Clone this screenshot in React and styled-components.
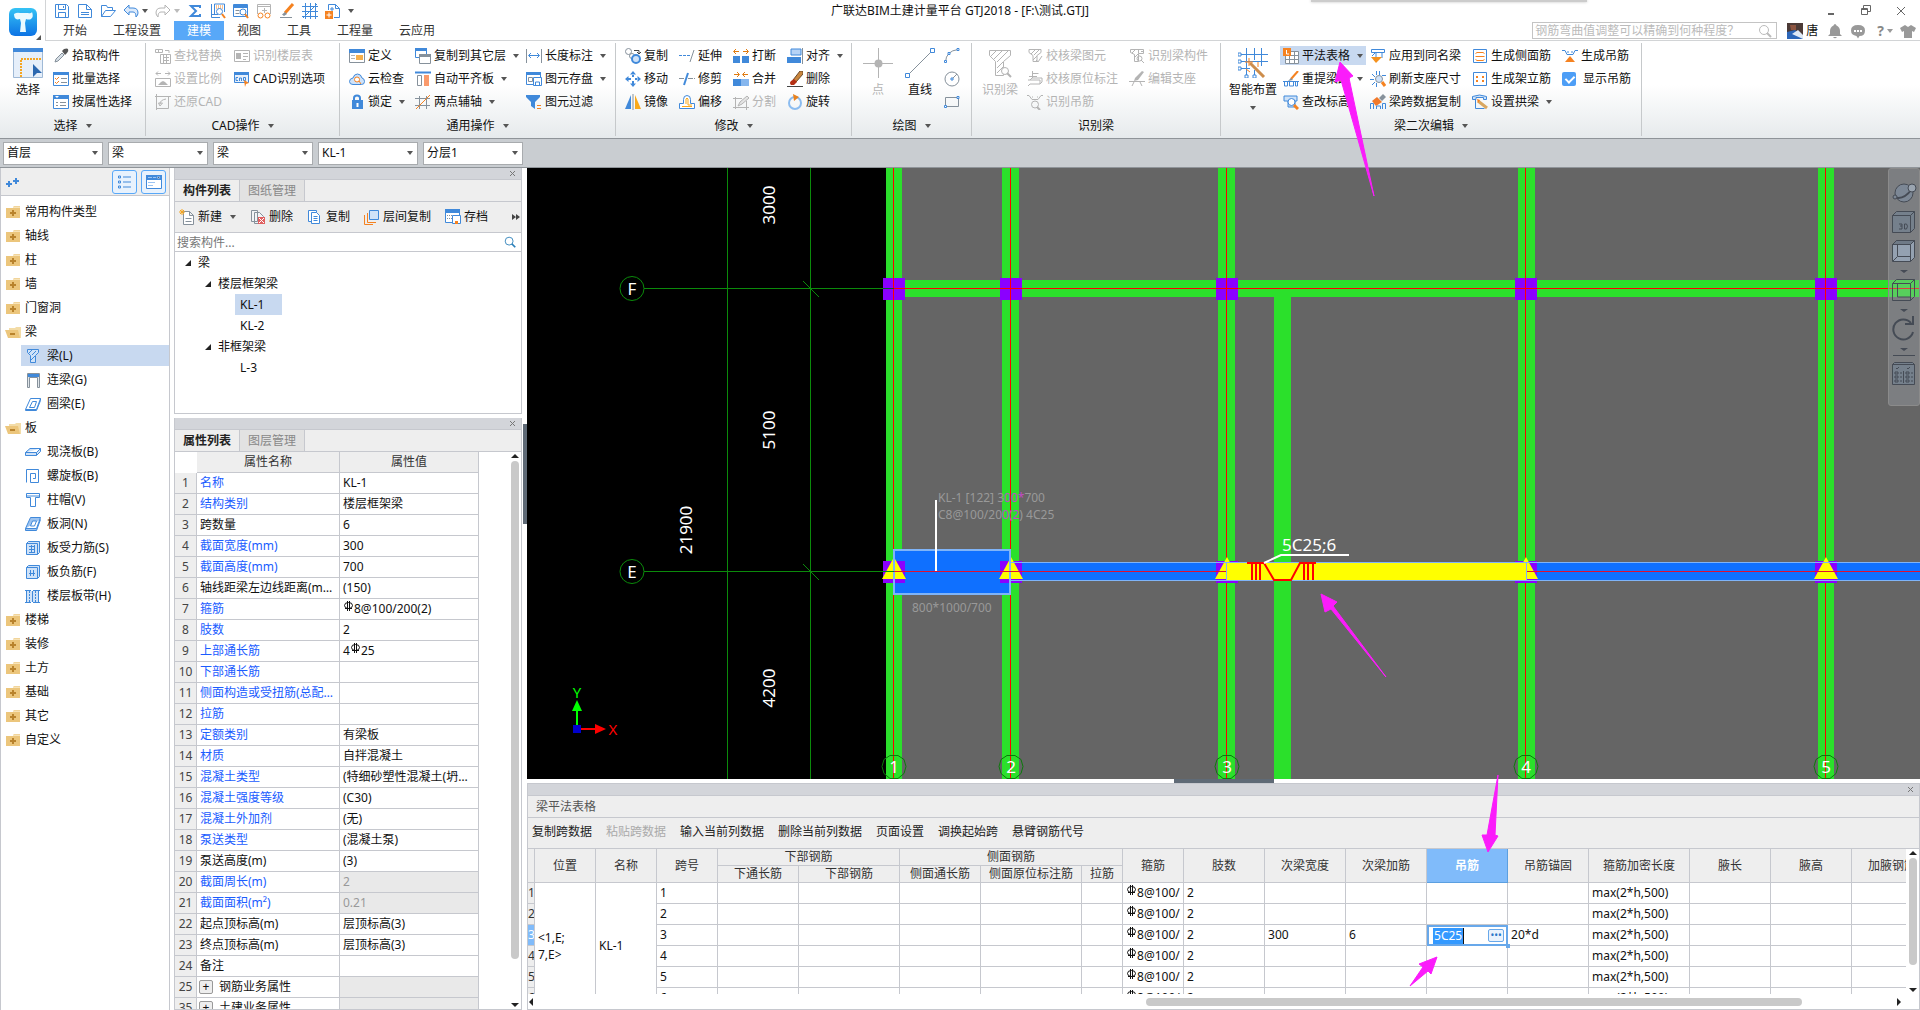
import styled, { createGlobalStyle, css } from 'styled-components';

const BLUE = '#4089da';
const PALE = '#cfe2f8';
const GREY = '#86919b';
const OFF = '#b4b4b4';
const ORANGE = '#f58220';
const LINE = '#c6c8ce';

const GlobalStyle = createGlobalStyle`
  * {
    box-sizing: border-box;
  }
  body {
    margin: 0;
    background: #fff;
  }
  body,
  button,
  input,
  select,
  table {
    font-family: 'Noto Sans', 'Noto Sans CJK SC', sans-serif;
    font-size: 12px;
    line-height: 16px;
    color: #111;
  }
  button {
    padding: 0;
    border: 0;
    background: none;
    white-space: nowrap;
  }
  ul {
    margin: 0;
    padding: 0;
    list-style: none;
  }
`;

/* ---------- icons ---------- */

const folder = (
  <>
    <path d="M1 4h7l1-2h6v12H1z" fill="#ecc67c" />
    <path d="M8 2.5h7V4H8z" fill="#f7e3b8" />
  </>
);

const filterShape = 'M2 1.5h12v3l-4 3v6H6v-6l-4-3z';

const icons = {
  save: (
    <g fill="none" stroke={BLUE}>
      <path d="M1.5 1.5h11l2 2v11h-13z" />
      <path d="M4.5 1.5v5h7v-5M4.5 14v-4.500h7V14M9.500 3v2" />
    </g>
  ),
  page: (
    <g fill="none" stroke={BLUE}>
      <path d="M1.500 1.500h8l5 5v8h-13zM9.500 1.500v5h5M4 9.500h8M4 11.500h8" />
    </g>
  ),
  open: (
    <path d="M1.5 13.500v-11h5l1 2h5v3h3l-5 6h-9l4-6h7" fill="none" stroke={BLUE} />
  ),
  undo: (
    <path d="M6 2 1 7l5 5V9h4q3 0 3 5 2-2 2-4 0-5-5-5H6z" fill="#dceafb" stroke={BLUE} />
  ),
  redo: (
    <path d="M10 2l5 5-5 5V9H6q-3 0-3 5-2-2-2-4 0-5 5-5h4z" fill="#fff" stroke={OFF} />
  ),
  sigma: <path d="M13 5V3H4l5 5-5 5h9v-2" fill="none" stroke={BLUE} strokeWidth="2" />,
  lookup: (
    <>
      <path d="M1.500 1v13.500H10M4.500 11.500V1h10v8M1.500 11.500H8" fill="none" stroke={BLUE} />
      <path d="M6 3h7M6 5h7" stroke={ORANGE} strokeDasharray="1 1" />
      <circle cx="9.500" cy="8.500" r="3" fill="#fff" stroke={BLUE} />
      <path d="m12 11 3 4" stroke={ORANGE} strokeWidth="2" />
    </>
  ),
  pageFind: (
    <>
      <path d="M.5 1.500h14v12H.5z" fill="#fff" stroke={BLUE} />
      <path d="M1 2h13v3H1z" fill={BLUE} />
      <path d="M2.500 7.500h4M2.500 10.500h4" stroke={GREY} />
      <circle cx="10" cy="9" r="3" fill="#fff" stroke={BLUE} />
      <path d="m12 11 3 4" stroke={ORANGE} strokeWidth="2" />
    </>
  ),
  glasses: (
    <>
      <path d="M1.500 11V1.500h13V11" fill="none" stroke={OFF} />
      <path d="M1 3.500h14M6 7.500h5M8.500 5v5" stroke={OFF} />
      <circle cx="4.500" cy="12.500" r="2.500" fill="#fff" stroke={ORANGE} />
      <circle cx="11.500" cy="12.500" r="2.500" fill="#fff" stroke={ORANGE} />
    </>
  ),
  brush: (
    <>
      <path d="M14 1 6 10" stroke={ORANGE} strokeWidth="3" />
      <path d="M3 11.500 6 9l2 2-3 2z" fill={GREY} />
      <path d="M1 14.500h12" stroke={GREY} />
    </>
  ),
  grid: (
    <path
      d="M3.500 0v16M8.500 0v16M13.500 0v16M0 3.500h16M0 8.500h16M0 13.500h16M1 15 15 1"
      fill="none"
      stroke={BLUE}
    />
  ),
  pageAdd: (
    <>
      <path d="M3.500 7V1.500h7l4 4v9H9M10.500 1.500v4h4" fill="none" stroke={BLUE} />
      <path d="M0 8h8v8H0z" fill={ORANGE} />
      <path d="M4 9.500v5M1.500 12h5" stroke="#fff" />
      <path d="M7 4v4M5 6h4" stroke={BLUE} />
    </>
  ),
  picker: (
    <>
      <path d="m2 14 1-3 6-6 2 2-6 6z" fill="#d7dfe6" stroke={GREY} />
      <path d="m9 3 2-2q3-1 4 0 1 2-1 4l-2 2z" fill="#555" />
    </>
  ),
  list: (
    <>
      <path d="M.5 1.500h15v13H.5z" fill="#fff" stroke={BLUE} />
      <path d="M0 1h16v3H0z" fill={BLUE} />
      <path d="m2 7 1.500 1.500L6 6M2 11l1.500 1.500L6 10" fill="none" stroke={ORANGE} />
      <path d="M8 7.500h6M8 11.500h6" stroke={GREY} />
    </>
  ),
  props: (
    <>
      <path d="M.5 1.500h15v13H.5z" fill="#fff" stroke={BLUE} />
      <path d="M0 1h16v4H0z" fill={BLUE} />
      <path d="m2 2 4 0-2 2z" fill="#fff" />
      <path d="M3 8.500h2M3 11.500h2M7 8.500h6M7 11.500h6" stroke={GREY} />
    </>
  ),
  swap: (
    <g fill="none" stroke={OFF}>
      <path d="M.5 1.500h7v3h-7zM3.500 1.500v3M10 2.500h4V5M5.500 6.500h10v9h-10zM8 9.500h6M8 12.500h6M8.500 7v8M11.500 7v8" />
    </g>
  ),
  card: (
    <>
      <path d="M.5 2.500h15v11H.5zM9 5.500h5M9 8.500h5M9 11.500h3" fill="none" stroke={OFF} />
      <path d="M2 5h5v6H2z" fill={OFF} />
    </>
  ),
  scale: (
    <>
      <path d="M1 2.500h5M10 2.500h5M3 .5l-2 2 2 2M13 .5l2 2-2 2M.5 7.500h15v8H.5z" fill="none" stroke={OFF} />
      <path d="m3 14 3-3 2-1 2 1 3 3z" fill={OFF} />
    </>
  ),
  cad: (
    <>
      <path d="M.5 1.500h14v10H.5z" fill="#e9f1fb" stroke={BLUE} />
      <path d="M0 1h15v3H0z" fill={BLUE} />
      <path d="M4 6.500H2v3h2M5.500 10V7h2v3M9.500 6.500h2v3h-2z" fill="none" stroke={BLUE} />
      <path d="m10 9 5 3-3 1-1 3z" fill={ORANGE} />
    </>
  ),
  restore: (
    <g fill="none" stroke={OFF}>
      <path d="M1.500 2.500h12v12h-12zM0 2.500h16M1.500 0v16" />
      <path d="M5 10q0-4 6-5M5 12 3.500 9h4z" strokeWidth="1" />
    </g>
  ),
  define: (
    <>
      <path d="M.5 1.500h15v13H.5z" fill="#fff" stroke={GREY} />
      <path d="M0 1h16v4H0z" fill={BLUE} />
      <path d="M2 7.500h4M2 10.500h4" stroke={OFF} />
      <path d="M7 7h7v5H7z" fill="#f6b04c" />
    </>
  ),
  cloud: (
    <>
      <path d="M4 13.500q-3.500 0-3.500-3T4 7q1-4 4.500-4T13 7q2.500.5 2.500 3.500t-3 3z" fill={PALE} stroke={BLUE} />
      <circle cx="8" cy="8.500" r="2.500" fill="#fff" stroke={ORANGE} />
      <path d="m10 10 2 3" stroke={ORANGE} />
    </>
  ),
  lock: (
    <>
      <path d="M5 7V4q0-2.500 3-2.500T11 4v3" fill="none" stroke={BLUE} strokeWidth="2" />
      <path d="M3 6h11v9H3z" fill={BLUE} />
      <path d="M8.500 9v4" stroke="#fff" strokeWidth="2" />
    </>
  ),
  copyFloor: (
    <>
      <path d="M.5 1.500h11v8H.5z" fill="#fff" stroke={BLUE} />
      <path d="M0 0h12v3H0z" fill={BLUE} />
      <path d="M4.500 7.500h11v8h-11z" fill="#fff" stroke={GREY} />
      <path d="M4 6h12v3H4z" fill={GREY} />
    </>
  ),
  align: (
    <>
      <path d="M0 1.500h16" stroke={BLUE} strokeWidth="2" />
      <path d="M2.500 4.500h4v10h-4z" fill="#fff" stroke={GREY} />
      <path d="M9 4h5v11H9z" fill="#fa9a6c" />
    </>
  ),
  twoPoint: (
    <>
      <path d="M4.500 2v13M11.500 2v13M0 4.500h15M0 11.500h15" stroke={GREY} />
      <path d="M1 15 15 1" stroke={ORANGE} />
    </>
  ),
  length: (
    <>
      <path d="M.5 1v14M15.500 1v14" stroke={GREY} />
      <path d="M3 7.500h10M5 5 2.500 7.500 5 10M11 5l2.500 2.500L11 10" fill="none" stroke={BLUE} strokeWidth="1" />
    </>
  ),
  store: (
    <>
      <path d="M.5 1.500h14v12H.5z" fill="#fff" stroke={BLUE} />
      <path d="M0 1h15v3H0z" fill={BLUE} />
      <path d="M2.500 6.500h4v4h-4z" fill="none" stroke={GREY} />
      <path d="M7.500 6.500h8v8h-8zM9.500 14v-3h4v3" fill="#fff" stroke={BLUE} />
    </>
  ),
  filter: (
    <>
      <path d="M0 1h14v2L9 8v7L5 12V8L0 3z" fill={BLUE} />
      <path d="M11 11.500h4M11 14.500h4" stroke={ORANGE} />
    </>
  ),
  copy: (
    <>
      <circle cx="3.500" cy="3.500" r="3" fill="#fff" stroke={GREY} />
      <circle cx="7" cy="8" r="2.500" fill="#fff" stroke={GREY} />
      <circle cx="11" cy="11" r="4" fill={PALE} stroke={BLUE} strokeWidth="2" />
      <path d="M9 2.500h5V6M12 4l2 2 2-2" fill="none" stroke="#444" />
    </>
  ),
  move: (
    <path
      d="M8 0 5 3.500h6zM8 16l-3-3.500h6zM0 8l3.500-3v6zM16 8l-3.500-3v6zM7 3h2v3H7zM7 10h2v3H7zM3 7h3v2H3zM10 7h3v2h-3z"
      fill={BLUE}
    />
  ),
  mirror: (
    <>
      <path d="M6 1v14H0z" fill={BLUE} />
      <path d="M10 1v14h6z" fill="#fba919" />
      <path d="M8 0v16" stroke={GREY} />
    </>
  ),
  extend: (
    <>
      <path d="M0 7.500h11" stroke={BLUE} strokeDasharray="3 1" />
      <path d="m15 2-4 12" stroke={GREY} />
    </>
  ),
  trim: (
    <>
      <path d="M0 7.500h5M9 7.500h7" stroke={GREY} strokeDasharray="5 1 2 1" />
      <path d="M9 2 5 14" stroke={BLUE} strokeWidth="2" />
    </>
  ),
  offset: (
    <>
      <path d="M.5 14.500v-5h4v-4q0-4 3.500-4t3.500 4v4h4v5z" fill="#fff" stroke={BLUE} />
      <path d="M3 12.500h10M7 10V5q1-2 2 0v6h4" fill="none" stroke="#fba919" />
    </>
  ),
  breakUp: (
    <>
      <path d="M0 8h7v7H0zM9 8h7v7H9z" fill={BLUE} />
      <path d="M1 3.500h5M10 3.500h5M3 1 .5 3.500 3 6M13 1l2.500 2.500L13 6" fill="none" stroke="#e07b10" />
    </>
  ),
  merge: (
    <>
      <path d="M0 8h8v7H0z" fill={BLUE} />
      <path d="M8 8h8v7H8z" fill="#85b6ee" />
      <path d="M1 3.500h5M10 3.500h5M4 1l2.500 2.500L4 6M12 1 9.500 3.500 12 6" fill="none" stroke="#e07b10" />
    </>
  ),
  split: (
    <>
      <path d="M0 4.500h9M2.500 3v12M0 13.500h16M13.500 7v9" stroke={OFF} />
      <path d="m5 12 2-4 7-6 2 2-7 6z" fill="#e4e4e4" stroke={OFF} />
    </>
  ),
  alignSide: (
    <>
      <path d="M4 1h10v6H4z" fill="#b6d3f6" stroke={BLUE} />
      <path d="M0 9h14v6H0z" fill={BLUE} />
      <path d="M15.500 0v16" stroke={GREY} />
    </>
  ),
  erase: (
    <>
      <path d="m6 9 7-9h3v3l-7 8z" fill="#c9853c" stroke="#6b4a2a" />
      <path d="m4 10 3-2 3 3-3 3H4q-2-2 0-4z" fill="#b42f14" />
      <path d="M0 15.500h16" stroke="#444" />
    </>
  ),
  rotate: (
    <>
      <circle cx="8" cy="9" r="6" fill="none" stroke="#8bbcf0" strokeWidth="2" />
      <path d="m6 0 6 3-5 4z" fill="#e8821e" />
    </>
  ),
  arc: (
    <>
      <path d="M1.500 14Q2 3 14 1.500" fill="none" stroke={GREY} />
      <path d="M.5 12.500h2v2h-2zM4 4.500h2v2H4zM13 .5h2v2h-2z" fill="#fff" stroke={BLUE} />
    </>
  ),
  circle: (
    <>
      <circle cx="8" cy="8" r="7" fill="none" stroke={GREY} />
      <path d="m8 8 5-5" stroke={GREY} />
      <path d="M7 7h2v2H7z" fill="#fff" stroke={BLUE} />
    </>
  ),
  rect: (
    <>
      <path d="M1.500 3.500h13v9h-13z" fill="none" stroke={GREY} />
      <path d="M.5 11.500h2v2h-2zM13 2.500h2v2h-2z" fill="#fff" stroke={BLUE} />
    </>
  ),
  checkBeam: (
    <g fill="none" stroke={OFF}>
      <path d={filterShape} />
      <path d="m4 6 4-4M7 7l5-5M6 12l4-4M9 12l2 2 4-6" />
    </g>
  ),
  checkNote: (
    <g fill="none" stroke={OFF}>
      <path d="M5.500 0v7M2 5.500h8M5.500 2.500h6M1 9h12v4H3l-2 2M3 9l2-2h10v4l-2 2" />
    </g>
  ),
  hangerFind: (
    <>
      <path d="M0 1.500h2l3 4h6l3-4h2M5 3h1M10 3h1" fill="none" stroke={OFF} />
      <circle cx="8" cy="10.500" r="3.500" fill="none" stroke={OFF} />
      <path d="m10 13 3 3" stroke={OFF} strokeWidth="2" />
    </>
  ),
  beamPart: (
    <g fill="none" stroke={OFF}>
      <path d="M1.500 1.500h13v4h-5v8h-4v-7l-4-2zM9.500 1.500v4M12 3.500h3" />
      <circle cx="10.500" cy="10.500" r="2.500" />
      <path d="m12 12 3 3M3 5l4-4M6 9l3-3" />
    </g>
  ),
  seat: (
    <>
      <path d="M0 10.500h16M5 11l-2 4M11 11l2 4" stroke={OFF} />
      <path d="m5 10 1-3 7-7 2 1-6 8z" fill={OFF} />
    </>
  ),
  sheet: (
    <>
      <path d="M2.500 3.500h13v12h-13zM2 7.500h14M2 11.500h14M6.500 3v13M11.500 3v13" fill="#fff" stroke={GREY} />
      <path d="M0 0h8v8H0z" fill={ORANGE} />
      <path d="M3.500 2v4H6" fill="none" stroke="#fff" />
    </>
  ),
  reSpan: (
    <>
      <path d="M15 0 8 8" stroke={ORANGE} strokeWidth="2" />
      <path d="m5 10 3-3 2 2z" fill={GREY} />
      <path d="M0 10.500h16M1.500 11v4h3v-4M6.500 11v4h4v-4M12.500 11v4h2v-4" fill="none" stroke={BLUE} />
    </>
  ),
  level: (
    <>
      <path d="M1 2h13v5h-2v6H5V7H1z" fill={PALE} stroke={BLUE} />
      <circle cx="8.500" cy="8" r="3.500" fill="#fff" stroke={BLUE} />
      <path d="m11 11 4 4" stroke={ORANGE} strokeWidth="3" />
    </>
  ),
  applySame: (
    <>
      <path d="M1.500 1.500h13v3h-13zM5 5l-3 3M12 5v5" fill="#fff" stroke={BLUE} />
      <path d="M1 9h11l-6 6z" fill="#f5921e" />
      <path d="M6 5v4" stroke={BLUE} />
    </>
  ),
  refresh: (
    <>
      <path d="M0 8.500h4M12 4.500h4M6.500 0v4M9.500 0v4M6.500 12v4M2 3l3 3M2 14l3-3" stroke={BLUE} />
      <circle cx="9" cy="8" r="3.500" fill={PALE} stroke={GREY} />
      <path d="m12 11 3 4" stroke={ORANGE} strokeWidth="3" />
    </>
  ),
  spanCopy: (
    <>
      <path d="m2 7 5-4 5 5-6 4z" fill="#f0792b" />
      <path d="m9 4 4-4 3 3-4 4z" fill={GREY} />
      <path d="M.5 15V9.500h3V15M6.500 15v-3h4v3M12.500 15V9.500h3V15" fill="none" stroke={BLUE} />
    </>
  ),
  sideBar: (
    <>
      <path d="M1.500 1.500h13v13h-13z" fill="#fff" stroke={BLUE} strokeWidth="1" />
      <path d="M5 4.500h6l1.500 1M3.500 8.500h9M5 12.500h6l1.500-1M3.500 5.500 5 4.500M3.500 11.500l1.500 1" stroke={ORANGE} fill="none" />
    </>
  ),
  frameBar: (
    <>
      <path d="M1.500 1.500h13v13h-13z" fill="#fff" stroke={BLUE} />
      <path d="M4 5h2v2H4zM10 5h2v2h-2zM4 9h2v2H4zM10 9h2v2h-2z" fill={ORANGE} />
    </>
  ),
  arch: (
    <>
      <path d="M.5 5.500v-3q7-3 14 0v3h-3v-2H4v2z" fill={PALE} stroke={BLUE} />
      <path d="M3.500 6v8.500h9" fill="none" stroke={BLUE} />
      <path d="m6 7 9 7" stroke="#d9a760" strokeWidth="3" />
      <path d="m5 5 3 1-2 3z" fill={ORANGE} />
    </>
  ),
  hanger: (
    <>
      <path d="M0 2.500h3l2 4h6l2-4h3M6 3v2M10 3v2" fill="none" stroke={BLUE} />
      <path d="m8 8 5 6H3z" fill={ORANGE} />
    </>
  ),
  create: (
    <>
      <path d="M4.500 2.500h6l4 4v9h-10zM10.500 2.500v4h4M6.500 9.500h6M6.500 12.500h6" fill="#fff" stroke={GREY} />
      <path d="M3 0v6M0 3h6M1 1l4 4M5 1 1 5" stroke="#f5a623" />
    </>
  ),
  remove: (
    <>
      <path d="M1.500 1.500h6v11h-6zM4.500 3.500h5l4 4v7h-9z" fill="#f2f4f6" stroke={GREY} />
      <path d="M8 8h7v7H8z" fill="#e06060" />
      <path d="m9 9 5 5M14 9l-5 5" stroke="#fff" />
    </>
  ),
  duplicate: (
    <>
      <path d="M1.500 1.500h8v11h-8z" fill="#fff" stroke={BLUE} />
      <path d="M4.500 3.500h5l3 3v8h-8zM6.500 7.500h4M6.500 9.500h4M6.500 11.500h4" fill="#fff" stroke={BLUE} />
    </>
  ),
  floorCopy: (
    <>
      <path d="M5.500 1.500h9v9h-9z" fill={PALE} stroke={BLUE} />
      <path d="M3.500 4v9.500H12M.5 6v9.500H9" fill="none" stroke={ORANGE} />
    </>
  ),
  archive: (
    <>
      <path d="M.5 1.500h14v12H.5z" fill="#fff" stroke={BLUE} />
      <path d="M0 0h15v4H0z" fill={BLUE} />
      <path d="M2 6.500h5M2 9.500h5" stroke={GREY} strokeDasharray="1 1" />
      <path d="M7.500 6.500h8v8h-8z" fill="#fff" stroke={BLUE} />
      <path d="M10 12h3v3h-3z" fill={ORANGE} />
    </>
  ),
  folderPlus: (
    <>
      {folder}
      <path d="M8 6v6M5 9h6" stroke="#b9832d" strokeWidth="2" />
    </>
  ),
  folderMinus: (
    <>
      <path d="M4 4h6l1-1h5v11H4z" fill="#f3dca7" />
      <path d="M0 6h13l2 8H3z" fill="#ecc67c" />
      <path d="M5 10h5" stroke="#b9832d" strokeWidth="2" />
    </>
  ),
  beam: (
    <>
      <path d="M2.500 1.500h11v3l-3 3v7h-5v-7l-3-3z" fill={PALE} stroke={BLUE} />
      <path d="m4 5 3-3M7 7l4-4M6 12l4-4" stroke={BLUE} />
    </>
  ),
  linkBeam: (
    <>
      <path d="M2.500 1.500h12v14h-2v-10h-8v10h-2z" fill="#e1e6ea" stroke={GREY} />
      <path d="M3 2h11v3H3z" fill={BLUE} />
    </>
  ),
  ringBeam: (
    <path d="M5.500 2.500h10l-4 11H.5zM7.500 5.500h4l-2 6H4.500zM.5 13.500v1h11l4-10v-2" fill="#fff" stroke={BLUE} />
  ),
  slab: <path d="M.5 8.500 5 4.500h10.500v3l-4 4H.5zM.5 8.500h11l4-4M11.500 8.500v3" fill={PALE} stroke={BLUE} />,
  spiral: (
    <path d="M1.500 14.500v-13h12v13h-8v-9h5v5H8" fill="none" stroke={BLUE} />
  ),
  cap: <path d="M1.500 1.500h13v4h-4v9h-5v-9h-4zM1.500 4h13" fill="#fff" stroke={BLUE} />,
  hole: (
    <>
      <path d="M5.500 1.500h10l-4 11H.5zM.5 12.500v2h11l4-11" fill="#9cc3f0" stroke={BLUE} />
      <path d="M7.500 5h4l-2 5H5.500z" fill="#fff" stroke={BLUE} />
    </>
  ),
  slabBar: (
    <path d="M1.500 3.500h11v11h-11zM1.500 3.500l2-2h11v11l-2 2M4 6.500h6M4 9.500h6M4 12.500h6M6.500 5v8M9.500 5v8" fill={PALE} stroke={BLUE} />
  ),
  negBar: (
    <path d="M1.500 3.500h11v11h-11zM1.500 3.500l2-2h11v11l-2 2M4 9.500h6M5.500 6v6M8.500 6v6" fill={PALE} stroke={BLUE} />
  ),
  strip: (
    <>
      <path d="M1 3h13v11H1z" fill={PALE} />
      <path d="M0 2.500h6M8 2.500h7M1.500 3v11M7.500 3v11M13.500 3v11M0 14.500h6M8 14.500h7" stroke={BLUE} />
      <path d="M4.500 3v11M10.500 3v11" stroke={BLUE} strokeDasharray="2 1" />
    </>
  ),
  bell: <path d="M8 1q1 0 1.500 1.500Q13 4 13 8v3l2 2H1l2-2V8q0-4 3.500-5.500Q7 1 8 1zM6 14h4q-2 2.500-4 0z" fill="#999" />,
  chat: (
    <>
      <path d="M8 2q7 0 7 5.500T9.500 13L8 15.500 6.500 13Q1 12 1 7.500 1 2 8 2z" fill="#999" />
      <path d="M4 7h2v2H4zM7 7h2v2H7zM10 7h2v2h-2z" fill="#fff" />
    </>
  ),
  shirt: <path d="m5 2 3 2 3-2 5 3-2 4-2-1v7H4V8L2 9 0 5z" fill="#999" />,
  search: (
    <>
      <circle cx="7" cy="7" r="4.500" fill="none" stroke="currentColor" />
      <path d="m10 10 4 4" stroke="currentColor" strokeWidth="2" />
    </>
  ),
  restoreWin: <path d="M5.500 5.500v-3h7v6h-3M3.500 5.500h6v6h-6zM3 6.500h7" fill="none" stroke="#666" />,
  closeWin: <path d="m4 4 8 8M12 4l-8 8" stroke="#666" />,
  minWin: <path d="M5 11h6" stroke="#666" strokeWidth="2" />,
  plusPlus: <path d="M4 7v6M1 10h6M11 4v6M8 7h6" stroke={BLUE} strokeWidth="2" />,
  avatar: (
    <>
      <path d="M0 0h16v16H0z" fill="#4c3a36" />
      <path d="M0 9 8 7l8 6v3H0z" fill="#2c66b8" />
      <path d="m5 11 6-4 5 5v4z" fill="#dfe9f5" />
      <path d="M3 2h6v5H4z" fill="#8d5440" />
    </>
  ),
};

const bigIcons = {
  select: (
    <>
      <path d="M.5.5h29v29H.500z" fill="#e6effa" stroke="#9fb9d6" />
      <path d="M0 0h30v4H0z" fill={BLUE} />
      <path d="M8 29V11h21" fill="none" stroke="#f5a623" strokeWidth="2" strokeDasharray="2 1" />
      <path d="m20 16 9 9-5 0-4 4z" fill="#2c68b0" />
    </>
  ),
  point: (
    <>
      <path d="M0 15.500h30M15.500 0v30" stroke={OFF} />
      <circle cx="15.500" cy="15.500" r="4" fill={OFF} />
    </>
  ),
  line: (
    <>
      <path d="M3 27 27 3" stroke={GREY} />
      <path d="M.5 25.500h4v4h-4zM25.500.5h4v4h-4z" fill="#fff" stroke={BLUE} />
    </>
  ),
  beamBig: (
    <>
      <path d="M4.500 2.500h21v5l-7 6v14h-8v-14l-6-6z" fill="none" stroke={OFF} />
      <path d="m6 8 5-5M9 11l8-8M12 14 23 3M12 20l6-6M12 25l6-6" stroke={OFF} />
      <circle cx="20" cy="23" r="3.500" fill="#fff" stroke={OFF} />
      <path d="m22 25 4 4" stroke={OFF} strokeWidth="2" />
    </>
  ),
  smart: (
    <>
      <path d="M0 6.500h30M0 13.500h30M0 20.500h12M8.500 0v30M16.500 0v12M16.500 22v8M23.500 0v18" stroke={BLUE} />
      <path d="M0 5h3v3H0zM0 12h3v3H0zM0 19h3v3H0zM7 27h3v3H7zM15 27h3v3h-3z" fill="#fff" stroke={BLUE} />
      <path d="m12 15 14 14" stroke="#cd8d4c" strokeWidth="3" />
      <path d="M11 10v8M7 14h8M8 21l4 3M20 14v5" stroke={ORANGE} />
    </>
  ),
};

const Svg = styled.svg`
  flex: none;
  display: block;
`;

function Icon({ name, size = 16 }) {
  return (
    <Svg width={size} height={size} viewBox="0 0 16 16" aria-hidden="true">
      {icons[name]}
    </Svg>
  );
}

const Caret = styled.span`
  flex: none;
  border: 3px solid transparent;
  border-top: 4px solid ${(p) => p.$color || '#555'};
  border-bottom: 0;
`;

/* ---------- title bar ---------- */

const Shell = styled.div`
  position: relative;
  display: flex;
  flex-direction: column;
  height: 100vh;
  overflow: hidden;
`;
const Header = styled.header`
  display: flex;
  height: 41px;
  border-bottom: 1px solid #d2d4d6;
`;
const LogoBox = styled.div`
  width: 46px;
  height: 41px;
  padding: 8px 0 0 9px;
  background: #fff;
  border-right: 1px solid #d2d4d6;
`;
const HeaderMain = styled.div`
  flex: 1;
  display: grid;
  grid-template-columns: 1fr auto 1fr;
  grid-template-rows: 21px 19px;
`;
const QuickBar = styled.div`
  display: flex;
  align-items: center;
  padding-left: 8px;
  gap: 7px;
`;
const QuickButton = styled.button`
  display: flex;
  align-items: center;
  gap: 3px;
`;
const Title = styled.h1`
  margin: 0;
  padding-right: 46px;
  font-size: 12px;
  font-weight: 400;
  line-height: 22px;
`;
const WindowButtons = styled.div`
  display: flex;
  justify-content: flex-end;
  align-items: center;
  gap: 19px;
  padding-right: 11px;
`;
const Tabs = styled.nav`
  display: flex;
  padding-left: 4px;
`;
const Tab = styled.button`
  padding: 0 13px;
  color: ${(p) => (p.$active ? '#fff' : '#333')};
  background: ${(p) => (p.$active ? '#58a8f8' : 'none')};
`;
const UserBar = styled.div`
  grid-column: 3;
  display: flex;
  justify-content: flex-end;
  align-items: center;
  gap: 7px;
  padding-right: 4px;
`;
const HelpBox = styled.label`
  display: flex;
  align-items: center;
  width: 245px;
  height: 17px;
  margin-right: 3px;
  padding-right: 3px;
  border: 1px solid #c4c4c4;
  color: #bbb;
  input {
    flex: 1;
    min-width: 0;
    height: 15px;
    padding: 0 2px;
    border: 0;
    outline: 0;
    background: none;
  }
  input::placeholder {
    color: #bbb;
  }
`;
const UserName = styled.span`
  margin: 0 2px 0 -4px;
`;
const HelpButton = styled.button`
  display: flex;
  align-items: center;
  gap: 3px;
  padding-left: 4px;
  color: #888;
  font-size: 14px;
  font-weight: 700;
`;
const PopupShadow = styled.div`
  position: absolute;
  top: 0;
  left: 1311px;
  width: 276px;
  height: 2px;
  background: #ccc;
  box-shadow: 0 0 3px #bbb;
`;

function Logo() {
  return (
    <Svg width="32" height="32" viewBox="0 0 32 32" role="img" aria-label="GTJ">
      <defs>
        <linearGradient id="logo" x1="0" y1="0" x2="0" y2="1">
          <stop offset="0" stopColor="#35c3f5" />
          <stop offset="1" stopColor="#0d73e4" />
        </linearGradient>
      </defs>
      <rect width="28" height="28" rx="6" fill="url(#logo)" />
      <path d="M5 6q3-2 6-1h8q3 1 4-1 2 5-1 7-2 1-5 0l-1 4 1 9h-6l1-9-1-4q-6 2-6-5z" fill="#e9faff" />
      <path d="M32 27v5h-5z" fill="#555" />
    </Svg>
  );
}

const quickItems = [
  ['save', '保存'],
  ['page', '新建'],
  ['open', '打开'],
  ['undo', '撤销', '#555'],
  ['redo', '恢复', '#bbb'],
  ['sigma', '汇总'],
  ['lookup', '查看'],
  ['pageFind', '查询'],
  ['glasses', '预览'],
  ['brush', '格式刷'],
  ['grid', '轴网'],
  ['pageAdd', '添加'],
];
const tabItems = ['开始', '工程设置', '建模', '视图', '工具', '工程量', '云应用'];

function TitleBar() {
  return (
    <Header>
      <LogoBox>
        <Logo />
      </LogoBox>
      <HeaderMain>
        <QuickBar>
          {quickItems.map(([name, label, caret]) => (
            <QuickButton key={name} aria-label={label}>
              <Icon name={name} />
              {caret && <Caret $color={caret} />}
            </QuickButton>
          ))}
          <Caret />
        </QuickBar>
        <Title>广联达BIM土建计量平台 GTJ2018 - [F:\测试.GTJ]</Title>
        <WindowButtons>
          <button aria-label="最小化">
            <Icon name="minWin" />
          </button>
          <button aria-label="还原">
            <Icon name="restoreWin" />
          </button>
          <button aria-label="关闭">
            <Icon name="closeWin" />
          </button>
        </WindowButtons>
        <Tabs>
          {tabItems.map((t) => (
            <Tab key={t} $active={t === '建模'}>
              {t}
            </Tab>
          ))}
        </Tabs>
        <UserBar>
          <HelpBox>
            <input aria-label="帮助搜索" placeholder="钢筋弯曲值调整可以精确到何种程度？" />
            <Icon name="search" />
          </HelpBox>
          <Icon name="avatar" />
          <UserName>唐</UserName>
          <button aria-label="通知">
            <Icon name="bell" />
          </button>
          <button aria-label="消息">
            <Icon name="chat" />
          </button>
          <HelpButton>
            ?<Caret $color="#999" />
          </HelpButton>
          <button aria-label="皮肤">
            <Icon name="shirt" />
          </button>
        </UserBar>
      </HeaderMain>
    </Header>
  );
}

/* ---------- ribbon ---------- */

const RibbonBar = styled.div`
  display: flex;
  height: 98px;
  padding-top: 2px;
  border-bottom: 1px solid #8f9499;
  background: linear-gradient(#fff 45%, #e6eaec);
`;
const Group = styled.section`
  display: flex;
  flex-direction: column;
  width: ${(p) => p.$width}px;
  height: 93px;
  border-right: 1px solid #c6c9cb;
`;
const GroupBody = styled.div`
  display: flex;
  height: 72px;
  padding-top: 1px;
  padding-left: ${(p) => p.$pad ?? 8}px;
`;
const GroupLabel = styled.div`
  display: flex;
  flex: 1;
  align-items: center;
  justify-content: center;
  gap: 8px;
`;
const Column = styled.div`
  display: flex;
  flex-direction: column;
  flex: none;
  width: ${(p) => p.$width}px;
`;
const toolCss = css`
  display: flex;
  align-items: center;
  align-self: flex-start;
  gap: 3px;
  height: 23px;
  padding: 0 1px;
  color: ${(p) => (p.disabled ? '#b4b4b4' : '#111')};
  ${Caret} {
    margin-left: 4px;
  }
`;
const Tool = styled.button`
  ${toolCss}
  ${(p) =>
    p.$hot &&
    css`
      height: 19px;
      margin: 2px 0 2px -2px;
      padding: 0 3px;
      background: #c8d9f0;
    `}
`;
const CheckTool = styled.label`
  ${toolCss}
  gap: 7px;
  input {
    appearance: none;
    width: 14px;
    height: 14px;
    margin: 0;
    border-radius: 2px;
    background: #4d9ef6;
  }
  input::after {
    content: '';
    display: block;
    width: 4px;
    height: 7px;
    margin: 2px 0 0 5px;
    border: solid #fff;
    border-width: 0 2px 2px 0;
    transform: rotate(45deg);
  }
`;
const BigTool = styled.button`
  display: flex;
  flex-direction: column;
  align-items: center;
  flex: none;
  gap: 4px;
  width: ${(p) => p.$width}px;
  padding-top: 4px;
  color: ${(p) => (p.disabled ? '#b4b4b4' : '#111')};
  ${Caret} {
    margin-top: 4px;
  }
`;

function Big({ name, label, width, disabled, caret }) {
  return (
    <BigTool $width={width} disabled={disabled}>
      <Svg width="30" height="30" viewBox="0 0 30 30" aria-hidden="true">
        {bigIcons[name]}
      </Svg>
      {label}
      {caret && <Caret />}
    </BigTool>
  );
}

// tool: [icon, label, flags] where flags holds c(aret), d(isabled), h(ot), k (check box)
function ToolColumn({ width, tools }) {
  return (
    <Column $width={width}>
      {tools.map(([name, label, flags = '']) =>
        flags.includes('k') ? (
          <CheckTool key={label}>
            <input type="checkbox" defaultChecked />
            {label}
          </CheckTool>
        ) : (
          <Tool
            key={name}
            aria-label={label || name}
            disabled={flags.includes('d')}
            $hot={flags.includes('h')}
          >
            <Icon name={name} />
            {label}
            {flags.includes('c') && <Caret />}
          </Tool>
        ),
      )}
    </Column>
  );
}

const groups = [
  {
    label: '选择', width: 146, caret: true, pad: 8,
    big: [{ name: 'select', label: '选择', width: 40 }],
    gap: 4,
    columns: [[90, [['picker', '拾取构件'], ['list', '批量选择'], ['props', '按属性选择']]]],
  },
  {
    label: 'CAD操作', width: 194, caret: true,
    columns: [
      [79, [['swap', '查找替换', 'd'], ['scale', '设置比例', 'd'], ['restore', '还原CAD', 'd']]],
      [100, [['card', '识别楼层表', 'd'], ['cad', 'CAD识别选项']]],
    ],
  },
  {
    label: '通用操作', width: 276, caret: true,
    columns: [
      [66, [['define', '定义'], ['cloud', '云检查'], ['lock', '锁定', 'c']]],
      [111, [['copyFloor', '复制到其它层', 'c'], ['align', '自动平齐板', 'c'], ['twoPoint', '两点辅轴', 'c']]],
      [88, [['length', '长度标注', 'c'], ['store', '图元存盘', 'c'], ['filter', '图元过滤']]],
    ],
  },
  {
    label: '修改', width: 236, caret: true,
    columns: [
      [54, [['copy', '复制'], ['move', '移动'], ['mirror', '镜像']]],
      [54, [['extend', '延伸'], ['trim', '修剪'], ['offset', '偏移']]],
      [54, [['breakUp', '打断'], ['merge', '合并'], ['split', '分割', 'd']]],
      [60, [['alignSide', '对齐', 'c'], ['erase', '删除'], ['rotate', '旋转']]],
    ],
  },
  {
    label: '绘图', width: 120, caret: true, pad: 5,
    big: [
      { name: 'point', label: '点', width: 42, disabled: true },
      { name: 'line', label: '直线', width: 42 },
    ],
    gap: 2,
    columns: [[20, [['arc', ''], ['circle', ''], ['rect', '']]]],
  },
  {
    label: '识别梁', width: 249, pad: 8,
    big: [{ name: 'beamBig', label: '识别梁', width: 40, disabled: true }],
    gap: 6,
    columns: [
      [102, [['checkBeam', '校核梁图元', 'd'], ['checkNote', '校核原位标注', 'd'], ['hangerFind', '识别吊筋', 'd']]],
      [84, [['beamPart', '识别梁构件', 'd'], ['seat', '编辑支座', 'd']]],
    ],
  },
  {
    label: '梁二次编辑', width: 421, caret: true, pad: 6,
    big: [{ name: 'smart', label: '智能布置', width: 52, caret: true }],
    gap: 3,
    columns: [
      [87, [['sheet', '平法表格', 'ch'], ['reSpan', '重提梁跨', 'c'], ['level', '查改标高']]],
      [102, [['applySame', '应用到同名梁'], ['refresh', '刷新支座尺寸'], ['spanCopy', '梁跨数据复制']]],
      [90, [['sideBar', '生成侧面筋'], ['frameBar', '生成架立筋'], ['arch', '设置拱梁', 'c']]],
      [78, [['hanger', '生成吊筋'], ['', '显示吊筋', 'k']]],
    ],
  },
];

const Gap = styled.span`
  width: ${(p) => p.$width}px;
`;

function Ribbon() {
  return (
    <RibbonBar>
      {groups.map((g) => (
        <Group key={g.label} $width={g.width}>
          <GroupBody $pad={g.pad}>
            {g.big?.map((b) => <Big key={b.name} {...b} />)}
            {g.gap && <Gap $width={g.gap} />}
            {g.columns.map(([width, tools]) => (
              <ToolColumn key={tools[0][0]} width={width} tools={tools} />
            ))}
          </GroupBody>
          <GroupLabel>
            {g.label}
            {g.caret && <Caret />}
          </GroupLabel>
        </Group>
      ))}
    </RibbonBar>
  );
}

/* ---------- selector bar ---------- */

const SelectorBar = styled.div`
  display: flex;
  align-items: center;
  gap: 5px;
  height: 29px;
  padding: 0 3px;
  background: #c9cdd1;
  border-bottom: 1px solid #8f9499;
`;
const Combo = styled.label`
  display: flex;
  align-items: center;
  width: 100px;
  height: 23px;
  padding-right: 4px;
  border: 1px solid #a8abae;
  background: #fff;
  select {
    appearance: none;
    flex: 1;
    min-width: 0;
    height: 21px;
    padding: 0 3px;
    border: 0;
    background: none;
  }
`;

function Selectors() {
  const items = [
    ['楼层', '首层'],
    ['构件类型', '梁'],
    ['构件', '梁'],
    ['名称', 'KL-1'],
    ['分层', '分层1'],
  ];
  return (
    <SelectorBar>
      {items.map(([label, value]) => (
        <Combo key={label}>
          <select aria-label={label}>
            <option>{value}</option>
          </select>
          <Caret />
        </Combo>
      ))}
    </SelectorBar>
  );
}

/* ---------- navigation tree ---------- */

const Workspace = styled.main`
  flex: 1;
  display: flex;
  min-height: 0;
`;
const NavPanel = styled.aside`
  flex: none;
  width: 170px;
  border: solid ${LINE};
  border-width: 0 1px;
`;
const NavHeader = styled.div`
  display: flex;
  align-items: center;
  gap: 4px;
  height: 28px;
  padding: 0 3px 0 4px;
  border-bottom: 1px solid ${LINE};
  background: #eee;
`;
const NavAdd = styled.button`
  margin-right: auto;
`;
const ViewButton = styled.button`
  display: grid;
  place-items: center;
  width: 25px;
  height: 24px;
  border: 1px solid #58a8f8;
  border-radius: 3px;
  background: #e8f2fd;
`;
const NavList = styled.ul`
  padding-top: 4px;
`;
const NavRow = styled.li`
  height: 24px;
  padding: 1px 0 2px;
  padding-left: ${(p) => (p.$child ? 20 : 4)}px;
`;
const NavButton = styled.button`
  display: flex;
  align-items: center;
  gap: ${(p) => (p.$child ? 6 : 4)}px;
  width: 100%;
  height: 21px;
  padding-left: ${(p) => (p.$child ? 4 : 0)}px;
  background: ${(p) => (p.$active ? '#c8d9f0' : 'none')};
`;

const navItems = [
  ['folderPlus', '常用构件类型'],
  ['folderPlus', '轴线'],
  ['folderPlus', '柱'],
  ['folderPlus', '墙'],
  ['folderPlus', '门窗洞'],
  ['folderMinus', '梁'],
  ['beam', '梁(L)', true],
  ['linkBeam', '连梁(G)', true],
  ['ringBeam', '圈梁(E)', true],
  ['folderMinus', '板'],
  ['slab', '现浇板(B)', true],
  ['spiral', '螺旋板(B)', true],
  ['cap', '柱帽(V)', true],
  ['hole', '板洞(N)', true],
  ['slabBar', '板受力筋(S)', true],
  ['negBar', '板负筋(F)', true],
  ['strip', '楼层板带(H)', true],
  ['folderPlus', '楼梯'],
  ['folderPlus', '装修'],
  ['folderPlus', '土方'],
  ['folderPlus', '基础'],
  ['folderPlus', '其它'],
  ['folderPlus', '自定义'],
];

function Navigation() {
  return (
    <NavPanel>
      <NavHeader>
        <NavAdd aria-label="添加">
          <Icon name="plusPlus" />
        </NavAdd>
        <ViewButton aria-label="列表视图">
          <Svg width="14" height="14" viewBox="0 0 14 14">
            <path
              d="M.5 1h2v2h-2zM.5 6h2v2h-2zM.5 11h2v2h-2zM5 2h8M5 7h8M5 12h8"
              fill="none"
              stroke={BLUE}
            />
          </Svg>
        </ViewButton>
        <ViewButton aria-label="卡片视图">
          <Svg width="16" height="14" viewBox="0 0 16 14">
            <path d="M.5.5h15v13H.5z" fill="#fff" stroke={BLUE} />
            <path d="M0 0h16v5H0z" fill={BLUE} />
            <path d="M2 2.500h4M7 2.500h3M11 2l3 0-1.500 2zM2 7.500h7M2 10.500h5" stroke="#9cc4f2" />
          </Svg>
        </ViewButton>
      </NavHeader>
      <NavList>
        {navItems.map(([icon, label, child]) => (
          <NavRow key={label} $child={child}>
            <NavButton $child={child} $active={label === '梁(L)'}>
              <Icon name={icon} />
              {label}
            </NavButton>
          </NavRow>
        ))}
      </NavList>
    </NavPanel>
  );
}

/* ---------- docked panels ---------- */

const DockColumn = styled.div`
  flex: none;
  display: flex;
  flex-direction: column;
  gap: 4px;
  width: 348px;
  margin-left: 4px;
`;
const Panel = styled.section`
  display: flex;
  flex-direction: column;
  min-height: 0;
  ${(p) => (p.$grow ? 'flex: 1;' : `flex: none; height: ${p.$height}px;`)}
  border: 1px solid ${LINE};
  border-top: 0;
  background: #fff;
`;
const PanelTop = styled.div`
  flex: none;
  display: flex;
  justify-content: flex-end;
  align-items: center;
  height: 12px;
  padding-right: 5px;
  border-bottom: 1px solid ${LINE};
  background: #d3d5da;
`;
const PanelTabs = styled.div`
  flex: none;
  display: flex;
  height: 22px;
  border-bottom: 1px solid ${LINE};
  background: #eee;
`;
const PanelTab = styled.button`
  width: 65px;
  border-right: 1px solid ${LINE};
  color: ${(p) => (p.$active ? '#222' : '#888')};
  background: ${(p) => (p.$active ? '#eee' : '#e2e2e2')};
  font-weight: ${(p) => (p.$active ? 700 : 400)};
`;
const PanelTools = styled.div`
  flex: none;
  display: flex;
  align-items: center;
  gap: 14px;
  height: 31px;
  padding: 0 1px 0 4px;
  border-bottom: 1px solid ${LINE};
  background: #eee;
`;
const PanelTool = styled.button`
  display: flex;
  align-items: center;
  gap: 3px;
  &:last-child {
    margin-left: auto;
  }
  ${Caret} {
    margin-left: 5px;
  }
`;
const SearchRow = styled.label`
  flex: none;
  display: flex;
  align-items: center;
  height: 19px;
  padding-right: 4px;
  border-bottom: 1px solid ${LINE};
  color: #2a7fb8;
  input {
    flex: 1;
    height: 18px;
    padding: 0 2px;
    border: 0;
    outline: 0;
  }
  input::placeholder {
    color: #777;
  }
`;
const Tree = styled.ul`
  button {
    display: flex;
    align-items: center;
    gap: 7px;
    height: 21px;
  }
`;
const TreeRow = styled.li`
  height: 21px;
  padding-left: ${(p) => p.$indent}px;
`;
const TreeLeaf = styled.button`
  width: 47px;
  padding-left: 5px;
  background: ${(p) => (p.$active ? '#c8d9f0' : 'none')};
`;

function CloseMark() {
  return (
    <button aria-label="关闭面板">
      <Svg width="7" height="7" viewBox="0 0 7 7">
        <path d="m1 1 5 5M6 1 1 6" stroke="#777" />
      </Svg>
    </button>
  );
}

function OpenMark() {
  return (
    <Svg width="6" height="6" viewBox="0 0 6 6">
      <path d="M6 0v6H0z" fill="#222" />
    </Svg>
  );
}

function ComponentPanel() {
  return (
    <Panel $height={246}>
      <PanelTop>
        <CloseMark />
      </PanelTop>
      <PanelTabs>
        <PanelTab $active>构件列表</PanelTab>
        <PanelTab>图纸管理</PanelTab>
      </PanelTabs>
      <PanelTools>
        <PanelTool>
          <Icon name="create" />
          新建
          <Caret />
        </PanelTool>
        <PanelTool>
          <Icon name="remove" />
          删除
        </PanelTool>
        <PanelTool>
          <Icon name="duplicate" />
          复制
        </PanelTool>
        <PanelTool>
          <Icon name="floorCopy" />
          层间复制
        </PanelTool>
        <PanelTool>
          <Icon name="archive" />
          存档
        </PanelTool>
        <PanelTool aria-label="更多">
          <Svg width="8" height="6" viewBox="0 0 8 6">
            <path d="M0 0v6l4-3zM4 0v6l4-3z" fill="#444" />
          </Svg>
        </PanelTool>
      </PanelTools>
      <SearchRow>
        <input aria-label="搜索构件" placeholder="搜索构件..." />
        <Icon name="search" size={14} />
      </SearchRow>
      <Tree>
        <TreeRow $indent={10}>
          <button>
            <OpenMark />梁
          </button>
        </TreeRow>
        <TreeRow $indent={30}>
          <button>
            <OpenMark />
            楼层框架梁
          </button>
        </TreeRow>
        <TreeRow $indent={60}>
          <TreeLeaf $active>KL-1</TreeLeaf>
        </TreeRow>
        <TreeRow $indent={60}>
          <TreeLeaf>KL-2</TreeLeaf>
        </TreeRow>
        <TreeRow $indent={30}>
          <button>
            <OpenMark />
            非框架梁
          </button>
        </TreeRow>
        <TreeRow $indent={60}>
          <TreeLeaf>L-3</TreeLeaf>
        </TreeRow>
      </Tree>
    </Panel>
  );
}

const PropBody = styled.div`
  flex: 1;
  display: flex;
  justify-content: space-between;
  min-height: 0;
  overflow: hidden;
`;
const PropTable = styled.table`
  flex: none;
  align-self: flex-start;
  width: 304px;
  table-layout: fixed;
  border-collapse: separate;
  border-spacing: 0;
  th,
  td {
    height: 21px;
    padding: 0 3px;
    border: solid ${LINE};
    border-width: 0 1px 1px 0;
    overflow: hidden;
    white-space: nowrap;
    text-overflow: ellipsis;
    font-weight: 400;
    text-align: left;
  }
  thead th {
    background: #eee;
    text-align: center;
    color: #333;
  }
  thead th:first-child {
    border-color: #fff;
    background: #fff;
  }
  tbody th {
    padding: 0;
    background: #eee;
    text-align: center;
    color: #444;
  }
`;
const NameCell = styled.td`
  color: ${(p) => (p.$blue ? '#1a5cff' : '#111')};
`;
const ValueCell = styled.td`
  color: ${(p) => (p.$locked ? '#999' : '#111')};
  background: ${(p) => (p.$locked ? '#e9e9e9' : '#fff')};
`;
const Expander = styled.button`
  width: 14px;
  height: 14px;
  margin: 0 6px 0 -1px;
  border: 1px solid #999;
  border-radius: 2px;
  background: #eee;
  line-height: 11px;
`;
const VScroll = styled.div`
  flex: none;
  display: flex;
  flex-direction: column;
  align-items: center;
  width: 13px;
  padding: 2px 0;
`;
const Thumb = styled.div`
  flex: none;
  width: ${(p) => (p.$across ? p.$length : '8px')};
  height: ${(p) => (p.$across ? '8px' : p.$length)};
  border-radius: 4px;
  background: #c9c9c9;
`;
const Arrow = styled.button`
  flex: none;
  border: 4px solid transparent;
  ${(p) => p.$dir === 'up' && 'border-bottom-color: #222; border-top: 0; margin-bottom: 3px;'}
  ${(p) => p.$dir === 'down' && 'border-top-color: #222; border-bottom: 0; margin-top: auto;'}
  ${(p) => p.$dir === 'left' && 'border-right-color: #222; border-left: 0;'}
  ${(p) => p.$dir === 'right' && 'border-left-color: #222; border-right: 0;'}
`;

// mark of the HRB400 steel grade
function Rebar() {
  return (
    <svg width="11" height="12" viewBox="0 0 11 12" role="img" aria-label="C">
      <ellipse cx="5.500" cy="4.500" rx="4" ry="3" fill="none" stroke="#111" />
      <path d="M4.500 0v10M6.500 0v10M2 7.500h7" stroke="#111" shapeRendering="crispEdges" />
    </svg>
  );
}

const properties = [
  [1, '名称', 'KL-1', 'b'],
  [2, '结构类别', '楼层框架梁', 'b'],
  [3, '跨数量', '6'],
  [4, '截面宽度(mm)', '300', 'b'],
  [5, '截面高度(mm)', '700', 'b'],
  [6, '轴线距梁左边线距离(mm)', '(150)'],
  [7, '箍筋', <><Rebar />8@100/200(2)</>, 'b'],
  [8, '肢数', '2', 'b'],
  [9, '上部通长筋', <>4<Rebar />25</>, 'b'],
  [10, '下部通长筋', '', 'b'],
  [11, '侧面构造或受扭筋(总配筋值)', '', 'b'],
  [12, '拉筋', '', 'b'],
  [13, '定额类别', '有梁板', 'b'],
  [14, '材质', '自拌混凝土', 'b'],
  [15, '混凝土类型', '(特细砂塑性混凝土(坍落度10~90mm))', 'b'],
  [16, '混凝土强度等级', '(C30)', 'b'],
  [17, '混凝土外加剂', '(无)', 'b'],
  [18, '泵送类型', '(混凝土泵)', 'b'],
  [19, '泵送高度(m)', '(3)'],
  [20, '截面周长(m)', '2', 'bl'],
  [21, '截面面积(m²)', '0.21', 'bl'],
  [22, '起点顶标高(m)', '层顶标高(3)'],
  [23, '终点顶标高(m)', '层顶标高(3)'],
  [24, '备注', ''],
  [25, '钢筋业务属性', '', 'lx'],
  [35, '土建业务属性', '', 'lx'],
];

function PropertyPanel() {
  return (
    <Panel $grow>
      <PanelTop>
        <CloseMark />
      </PanelTop>
      <PanelTabs>
        <PanelTab $active>属性列表</PanelTab>
        <PanelTab>图层管理</PanelTab>
      </PanelTabs>
      <PropBody>
        <PropTable>
          <colgroup>
            <col width="22" />
            <col width="143" />
            <col width="139" />
          </colgroup>
          <thead>
            <tr>
              <th aria-label="序号" />
              <th>属性名称</th>
              <th>属性值</th>
            </tr>
          </thead>
          <tbody>
            {properties.map(([no, name, value, flags = '']) => (
              <tr key={no}>
                <th>{no}</th>
                <NameCell $blue={flags.includes('b')}>
                  {flags.includes('x') && <Expander>+</Expander>}
                  {name}
                </NameCell>
                <ValueCell $locked={flags.includes('l')}>{value}</ValueCell>
              </tr>
            ))}
          </tbody>
        </PropTable>
        <VScroll>
          <Arrow $dir="up" aria-label="向上" />
          <Thumb $length="90%" />
          <Arrow $dir="down" aria-label="向下" />
        </VScroll>
      </PropBody>
    </Panel>
  );
}

/* ---------- drawing area ---------- */

const Splitter = styled.div`
  flex: none;
  display: flex;
  ${(p) =>
    p.$across
      ? 'height: 4px; padding-left: 647px;'
      : 'width: 5px; padding: 256px 0 0 1px;'}
`;
const Grip = styled.div`
  width: ${(p) => (p.$across ? 100 : 4)}px;
  height: ${(p) => (p.$across ? 4 : 100)}px;
  background: #5f6a76;
`;
const RightSide = styled.div`
  flex: 1;
  display: flex;
  flex-direction: column;
  min-width: 0;
`;
const CanvasArea = styled.div`
  position: relative;
  flex: 1;
  min-height: 0;
  overflow: hidden;
  background: #656565;
`;
const Drawing = styled.svg`
  display: block;
  width: 100%;
  height: 100%;
`;
const ViewTools = styled.div`
  position: absolute;
  top: 0;
  right: 0;
  width: 32px;
  height: 238px;
  padding: 10px 3px;
  border: 1px solid #8b8b8b;
  border-radius: 3px;
  background: rgba(170, 175, 182, 0.35);
`;

// axis number, axis x, beam x, beam width
const axes = [
  [1, 894, 886, 16],
  [2, 1011, 1002, 17],
  [3, 1227, 1218, 17],
  [4, 1526, 1518, 17],
  [5, 1826, 1818, 16],
];
const dims = [
  ['3000', 769, 205],
  ['5100', 769, 430],
  ['4200', 769, 688],
  ['21900', 686, 530],
];

function Plan() {
  return (
    <Drawing viewBox="527 168 1393 611" preserveAspectRatio="xMinYMin slice">
      <path d="M527 168h359v611H527z" fill="#000" />
      <g fill="#2be02b">
        {axes.map(([n, , x, w]) => (
          <rect key={n} x={x} y="168" width={w} height="611" />
        ))}
        <rect x="1274" y="288" width="17" height="491" />
        <rect x="894" y="280" width="1026" height="17" />
      </g>
      <g stroke="#0b8a0b" fill="none">
        <path d="M727.500 168v611M810.500 168v611M644 288.500h250M644 571.500h250" />
        <path d="m803 281 16 16M803 564l16 16" />
        <circle cx="632" cy="288.500" r="12" />
        <circle cx="632" cy="571.500" r="12" />
      </g>
      <g fill="#8b00ff">
        {axes.map(([n, x]) => (
          <rect key={n} x={x - 11} y="278" width="22" height="22" />
        ))}
      </g>
      <path d="M894 288.500h1026" stroke="#f00" />
      {axes.map(([n, x]) => (
        <path key={n} d={`M${x - 0.5} 168v611`} stroke="#f00" />
      ))}
      <path d="M883 288.500h11" stroke="#0b5a2b" />
      <g fill="#0f70ff">
        <rect x="1011" y="562" width="909" height="19" />
        <rect x="894" y="549" width="117" height="46" />
      </g>
      <g fill="#8b00ff">
        {axes.map(([n, x]) => (
          <rect key={n} x={x - 11} y="561" width="22" height="22" />
        ))}
      </g>
      <rect x="1227" y="563" width="299" height="17" fill="#ff0" />
      <g fill="#ff0">
        {axes.map(([n, x]) => (
          <path key={n} d={`M${x} 557l12 22h-24z`} />
        ))}
      </g>
      <g fill="none" stroke="#7fb4f8">
        <path d="M1011 562.500h909M1011 580.500h909M1226.500 562v19M1526.500 562v19" />
        <rect x="894" y="550" width="116" height="44" strokeWidth="2" />
      </g>
      <path d="M883 571.500h11" stroke="#0b8a0b" />
      <path d="M894 571.500h332M1527 571.500h393" stroke="#e01030" />
      <path d="M936 500v71" stroke="#fff" strokeWidth="2" />
      <g fill="#999" fontSize="12">
        <text x="938" y="502">
          KL-1 [122] 3<tspan fill="#c04ac8">00*</tspan>700
        </text>
        <text x="938" y="519">
          C8@100/20<tspan fill="#c04ac8">0(2</tspan>) 4C25
        </text>
        <text x="912" y="612">800*1000/700</text>
      </g>
      <g fill="none" stroke="#f00" strokeWidth="2">
        <path d="M1247 563h17l10 17h17l9-17h16" />
        <path d="M1252 563v17M1256 563v17M1260 563v17M1304 563v17M1308 563v17M1313 563v17" />
      </g>
      <path d="m1264 563 17-8h68" fill="none" stroke="#fff" strokeWidth="2" />
      <g fill="#fff" fontSize="17">
        <text x="1282" y="551">5C25;6</text>
        {dims.map(([t, x, y]) => (
          <text key={t} textAnchor="middle" transform={`translate(${x + 6} ${y}) rotate(-90)`}>
            {t}
          </text>
        ))}
        <text x="632" y="295" textAnchor="middle">F</text>
        <text x="632" y="578" textAnchor="middle">E</text>
      </g>
      {axes.map(([n, x]) => (
        <g key={n}>
          <path
            d={`M${x - 4} 755.500h8l6 4 2 7-2 7-6 5h-8l-6-5-2-7 2-7z`}
            fill="none"
            stroke="#0b7a0b"
          />
          <text x={x} y="773" fontSize="17" fill="#fff" textAnchor="middle">
            {n}
          </text>
        </g>
      ))}
      <path d="M577 728v-20" stroke="#0f0" strokeWidth="2" />
      <path d="m577 700-5 11h10z" fill="#0f0" />
      <path d="M577 729h20" stroke="#f00" strokeWidth="2" />
      <path d="m606 729-11-5v10z" fill="#f00" />
      <path d="M573 725h8v8h-8z" fill="#00c" />
      <text x="577" y="698" fontSize="15" fill="#0f0" textAnchor="middle">Y</text>
      <text x="613" y="735" fontSize="15" fill="#f00" textAnchor="middle">X</text>
    </Drawing>
  );
}

function ViewBar() {
  return (
    <ViewTools>
      <Svg width="26" height="212" viewBox="0 0 26 212" fill="none" stroke="#454b55">
        <circle cx="12" cy="14" r="9" fill="#7c8795" />
        <path d="M2 18q9 4 18-8" strokeWidth="2" />
        <circle cx="20" cy="9" r="4" fill="#9aa4b0" />
        <circle cx="3" cy="18" r="2" fill="#7c8795" />
        <path d="M.5 36.500h18v17H.5zM.5 36.500l4-4h18v17l-4 4M18.500 36.500l4-4" fill="#75808c" />
        <path d="M7 45h3v5H7M8 47h2M12.500 45v5h2q2-3 0-5z" />
        <path d="M.5 65.500h18v17H.5zM.5 65.500l4-4h18v17l-4 4M18.500 65.500l4-4" fill="#94a1b1" />
        <path d="M.5 65.500l4-4h18l-4 4z" fill="#6f7a87" />
        <path d="M5.500 65.500v12h13M1 82l4-4" />
        <path d="M.5 104.500h18v17H.5zM.5 104.500l4-4h18v17l-4 4M18.500 104.500l4-4M5.500 104v14h13" />
        <path d="M19 144a10 10 0 1 0 2 9M21 137v8h-8" strokeWidth="2" />
        <path d="M1 176.500h22" />
        <path d="M.5 185.500h22v20H.5zM.5 185.500l2-2h18l2 2" fill="#75808c" />
        <path d="M11.500 192v12M3 193h3v2H3zM3 197h3v2H3zM3 201h3v2H3zM14 193h3v2h-3zM14 197h3v2h-3zM14 201h3v2h-3zM4 189l1 1 2-2M15 189l1 1 2-2M8 194h2M8 198h2M8 202h2M19 194h2M19 198h2M19 202h2" />
        <path d="M8 91h8l-4 3zM8 130h8l-4 3zM8 169h8l-4 3z" fill="#454b55" stroke="none" />
      </Svg>
    </ViewTools>
  );
}

/* ---------- beam table ---------- */

const BeamPanel = styled(Panel)`
  border-top: 1px solid ${LINE};
`;
const BeamTitle = styled.h2`
  flex: none;
  margin: 0;
  padding-left: 8px;
  border-bottom: 1px solid ${LINE};
  background: #eee;
  color: #555;
  font-size: 12px;
  font-weight: 400;
  line-height: 21px;
`;
const BeamTools = styled.div`
  flex: none;
  display: flex;
  gap: 14px;
  height: 31px;
  padding: 0 0 2px 4px;
  border-bottom: 1px solid ${LINE};
  background: #eee;
  button {
    color: #222;
  }
  button:disabled {
    color: #aaa;
  }
`;
const BeamBody = styled.div`
  flex: 1;
  display: flex;
  min-height: 0;
`;
const TableClip = styled.div`
  flex: 1;
  min-width: 0;
  overflow: hidden;
`;
const BeamTable = styled.table`
  width: 1405px;
  table-layout: fixed;
  border-collapse: separate;
  border-spacing: 0;
  th,
  td {
    height: 21px;
    padding: 0 3px;
    border: solid ${LINE};
    border-width: 0 1px 1px 0;
    font-weight: 400;
    overflow: hidden;
    white-space: nowrap;
  }
  thead th {
    height: 17px;
    padding: 0;
    background: #eee;
    color: #333;
    line-height: 14px;
  }
  tbody th {
    padding: 0;
    background: #eee;
  }
`;
const HeadCell = styled.th`
  && {
    ${(p) =>
      p.$active &&
      css`
        background: #80bbfa;
        border-color: #5b9fe0;
        color: #fff;
        font-weight: 700;
      `}
  }
`;
const RowNo = styled.th`
  && {
    color: ${(p) => (p.$active ? '#fff' : '#333')};
    background: ${(p) => (p.$active ? '#80bbfa' : '#eee')};
  }
`;
const MergedCell = styled.td`
  && {
    white-space: normal;
    line-height: 17px;
  }
`;
const EditCell = styled.td`
  && {
    position: relative;
    padding: 0 2px 0 4px;
    border: 2px solid #68a8ea;
    overflow: visible;
  }
`;
const Editor = styled.div`
  display: flex;
  align-items: center;
  justify-content: space-between;
  height: 17px;
  input {
    width: 31px;
    height: 16px;
    padding: 0 1px;
    border: 0;
    border-right: 1px solid #111;
    background: #3399ff;
    color: #fff;
  }
  button {
    width: 16px;
    height: 13px;
    border: 1px solid #68a8ea;
    border-radius: 2px;
    background: #eaf3fd;
    color: #2c78c8;
    font-size: 10px;
    line-height: 9px;
  }
`;
const Handle = styled.span`
  position: absolute;
  right: -4px;
  bottom: -4px;
  width: 4px;
  height: 4px;
  background: #68a8ea;
`;
const HScroll = styled.div`
  flex: none;
  display: flex;
  align-items: center;
  height: 15px;
  padding: 0 15px 0 1px;
`;

const colWidths = [7, 61, 61, 61, 81, 101, 81, 101, 41, 61, 81, 81, 81, 81, 81, 101, 81, 81, 81];
const tailHeads = ['箍筋', '肢数', '次梁宽度', '次梁加筋', '吊筋', '吊筋锚固', '箍筋加密长度', '腋长', '腋高', '加腋钢筋'];
const tools = ['复制跨数据', '粘贴跨数据', '输入当前列数据', '删除当前列数据', '页面设置', '调换起始跨', '悬臂钢筋代号'];

function SpanRow({ n }) {
  const active = n === 3;
  return (
    <tr>
      <RowNo $active={active}>{n}</RowNo>
      {n === 1 && (
        <>
          <MergedCell rowSpan={6}>
            &lt;1,E;
            <br />
            7,E&gt;
          </MergedCell>
          <MergedCell rowSpan={6}>KL-1</MergedCell>
        </>
      )}
      <td>{n}</td>
      <td />
      <td />
      <td />
      <td />
      <td />
      <td>
        <Rebar />
        8@100/
      </td>
      <td>2</td>
      <td>{active && '300'}</td>
      <td>{active && '6'}</td>
      {active ? (
        <EditCell>
          <Editor>
            <input aria-label="吊筋" defaultValue="5C25" />
            <button aria-label="更多选项">•••</button>
          </Editor>
          <Handle />
        </EditCell>
      ) : (
        <td />
      )}
      <td>{active && '20*d'}</td>
      <td>max(2*h,500)</td>
      <td />
      <td />
      <td />
    </tr>
  );
}

function BeamSheet() {
  return (
    <BeamPanel $height={227}>
      <PanelTop>
        <CloseMark />
      </PanelTop>
      <BeamTitle>梁平法表格</BeamTitle>
      <BeamTools>
        {tools.map((t) => (
          <button key={t} disabled={t === '粘贴跨数据'}>
            {t}
          </button>
        ))}
      </BeamTools>
      <BeamBody>
        <TableClip>
          <BeamTable>
            <colgroup>
              {colWidths.map((w, i) => (
                <col key={i} width={w} />
              ))}
            </colgroup>
            <thead>
              <tr>
                <th rowSpan={2} aria-label="序号" />
                <th rowSpan={2}>位置</th>
                <th rowSpan={2}>名称</th>
                <th rowSpan={2}>跨号</th>
                <th colSpan={2}>下部钢筋</th>
                <th colSpan={3}>侧面钢筋</th>
                {tailHeads.map((h) => (
                  <HeadCell key={h} rowSpan={2} $active={h === '吊筋'}>
                    {h}
                  </HeadCell>
                ))}
              </tr>
              <tr>
                <th>下通长筋</th>
                <th>下部钢筋</th>
                <th>侧面通长筋</th>
                <th>侧面原位标注筋</th>
                <th>拉筋</th>
              </tr>
            </thead>
            <tbody>
              {[1, 2, 3, 4, 5, 6].map((n) => (
                <SpanRow key={n} n={n} />
              ))}
            </tbody>
          </BeamTable>
        </TableClip>
        <VScroll>
          <Arrow $dir="up" aria-label="向上" />
          <Thumb $length="107px" />
          <Arrow $dir="down" aria-label="向下" />
        </VScroll>
      </BeamBody>
      <HScroll>
        <Arrow $dir="left" aria-label="向左" />
        <Gap $width={613} />
        <Thumb $across $length="656px" />
        <Gap $width={95} />
        <Arrow $dir="right" aria-label="向右" />
      </HScroll>
    </BeamPanel>
  );
}

/* ---------- pointer marks over the window ---------- */

const Marks = styled.svg`
  position: absolute;
  top: 0;
  left: 0;
  width: 1920px;
  height: 1010px;
  pointer-events: none;
`;

export default function App() {
  return (
    <Shell>
      <GlobalStyle />
      <TitleBar />
      <Ribbon />
      <Selectors />
      <Workspace>
        <Navigation />
        <DockColumn>
          <ComponentPanel />
          <PropertyPanel />
        </DockColumn>
        <Splitter>
          <Grip />
        </Splitter>
        <RightSide>
          <CanvasArea>
            <Plan />
            <ViewBar />
          </CanvasArea>
          <Splitter $across>
            <Grip $across />
          </Splitter>
          <BeamSheet />
        </RightSide>
      </Workspace>
      <PopupShadow />
      <Marks viewBox="0 0 1920 1010" fill="#fb1cfb" stroke="#fb1cfb" strokeLinejoin="round">
        <path d="m1340 62 13 14-4 2 25 118-33-116-6 2z" />
        <path d="m1321 594 16 8-4 4 53 71-55-68-6 3z" />
        <path d="m1488 852-6-17 5 0 11-60-3 60 3 1z" />
        <path d="m1437 957-6 17-3-3-18 15 13-19-4-3z" />
      </Marks>
    </Shell>
  );
}
